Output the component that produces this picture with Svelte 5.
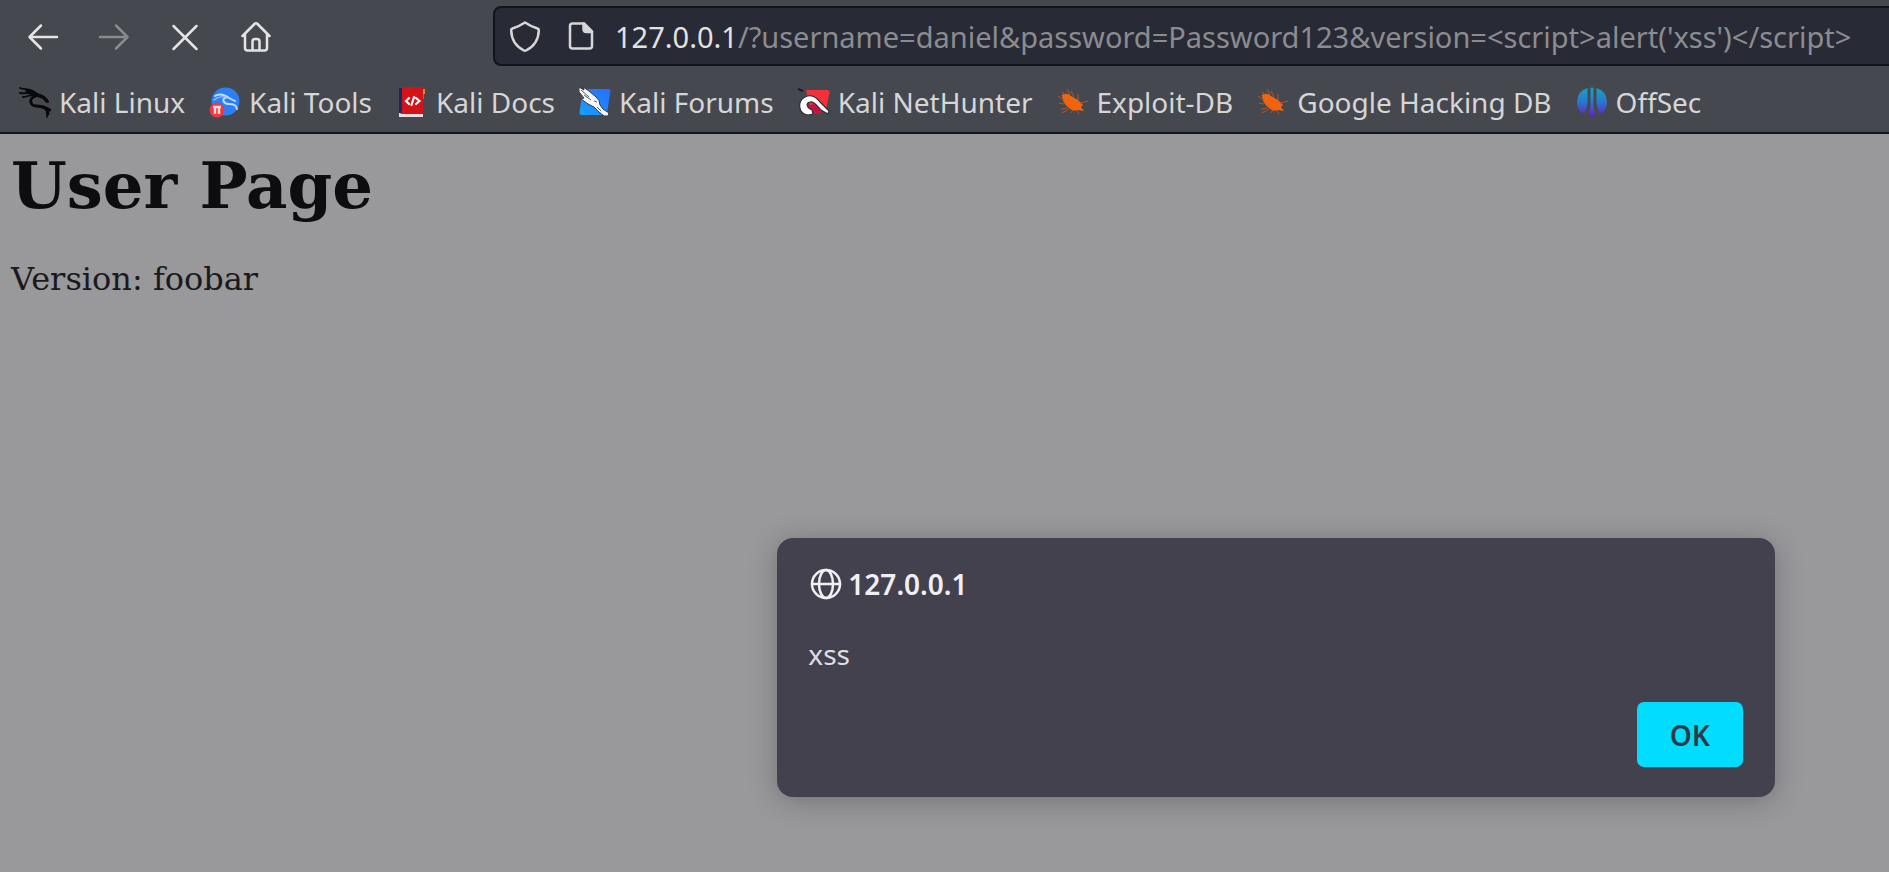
<script>
  const bookmarks = [
    { id: 'kali', label: 'Kali Linux' },
    { id: 'tools', label: 'Kali Tools' },
    { id: 'docs', label: 'Kali Docs' },
    { id: 'forums', label: 'Kali Forums' },
    { id: 'nethunter', label: 'Kali NetHunter' },
    { id: 'exploit', label: 'Exploit-DB' },
    { id: 'exploit', label: 'Google Hacking DB' },
    { id: 'offsec', label: 'OffSec' }
  ];
  const host = '127.0.0.1';
  const query = "/?username=daniel&password=Password123&version=<" + "script>alert('xss')</" + "script>";
</script>

<div class="browser">
  <header>
    <div class="toolbar">
      <nav class="controls" aria-label="Navigation">
        <button aria-label="Back">
          <svg viewBox="0 0 32 32"><path d="M30 16H3M14 4.500L2.500 16L14 27.500" /></svg>
        </button>
        <button aria-label="Forward" disabled>
          <svg viewBox="0 0 32 32"><path d="M2 16H29M18 4.500L29.500 16L18 27.500" /></svg>
        </button>
        <button aria-label="Stop">
          <svg viewBox="0 0 32 32"><path d="M4.500 5L27.500 28M27.500 5L4.500 28" /></svg>
        </button>
        <button aria-label="Home">
          <svg viewBox="0 0 32 32"><path d="M2.500 15L14.500 3Q16 1.500 17.500 3L29.500 15M5 13V27Q5 29.500 7.500 29.500H24.500Q27 29.500 27 27V13M12.500 29V20.500Q12.500 18 15 18H17Q19.500 18 19.500 20.500V29" /></svg>
        </button>
      </nav>
      <div class="address">
        <svg viewBox="0 0 32 32" aria-hidden="true"><path d="M16 2.500Q22 6.500 28.500 8.500Q30 9 29.800 10.500C29.500 20 24 27 17 30.500Q16 31 15 30.500C8 27 2.500 20 2.200 10.500Q2 9 3.500 8.500Q10 6.500 16 2.500Z" /></svg>
        <svg class="doc" viewBox="0 0 32 32" aria-hidden="true"><path d="M7.500 3.500H19L27 11.500V26Q27 28.500 24.500 28.500H7.500Q5 28.500 5 26V6Q5 3.500 7.500 3.500Z" /><path class="solid" d="M18.500 3.500V9Q18.500 12 21.500 12H27Z" /></svg>
        <div class="url"><b>{host}</b>{query}</div>
      </div>
    </div>
    <nav class="bookmarks" aria-label="Bookmarks">
      {#each bookmarks as item}
        <a href="#bookmark">
          <svg viewBox="0 0 32 32" aria-hidden="true">
            {#if item.id === 'kali'}
              <g fill="none" stroke="#08090b" stroke-linecap="round" stroke-linejoin="round">
                <path stroke-width="1.800" d="M1 2C6 4 9 2 14 5C17 7 19 9 21 9C25 10 27 13 29 16M1 7C6 8 9 6 14 8M4 11C8 11 10 9 14 9" />
                <path stroke-width="3.200" d="M8 5C14 6 18 10 24 11L28 15" />
                <path stroke-width="2.800" d="M17 10C9 12 11 20 17 20C23 20 29 21 29 28M27 22L31 24" />
                <path stroke-width="1.600" d="M28 22L28 31" />
              </g>
            {:else if item.id === 'tools'}
              <circle cx="16.500" cy="15.500" r="14" fill="#2b80f6" />
              <g fill="none" stroke="#c7dcfb" stroke-linecap="round">
                <path stroke-width="1.800" d="M6 10C11 7 16 9 20 12L26 15" />
                <path stroke-width="2" d="M18 11C12 12 14 18 20 18C25 18 27 19 28 23" />
                <path stroke-width="1.200" stroke="#a8caf9" d="M5 14C10 10 14 10 18 12" />
              </g>
              <circle cx="8" cy="24" r="7.500" fill="#f0383e" />
              <path d="M4 21H12M6 21V28M10 21V28" stroke="#ffdada" stroke-width="2.400" fill="none" />
            {:else if item.id === 'docs'}
              <path d="M3 2H7V27H3Z" fill="#142a63" /><path d="M3 27H27V31H3Z" fill="#eadde0" />
              <path d="M6 1H27V28H4Q6 27 6 24Z" fill="#d31318" />
              <path d="M27 3H29V8H27Z" fill="#e48a20" /><path d="M27 8H28V13H27Z" fill="#43994c" />
              <path d="M13 12L10 15L13 18M20 12L23.500 15L20 18M18 11L15.500 19" stroke="#fff" stroke-width="2.200" fill="none" stroke-linecap="round" />
            {:else if item.id === 'forums'}
              <defs><linearGradient id="forum" x1="0" y1="1" x2="1" y2="0"><stop offset="0" stop-color="#17a2ff" /><stop offset="1" stop-color="#286cff" /></linearGradient></defs>
              <path d="M4 3H30Q32 3 31.500 5L28 27Q27.500 29 25 29H3Q0 29 0.500 26Z" fill="url(#forum)" />
              <path d="M0 1L5 4L4 1L10 5L17 11Q21 14 21 19L24 23L30 27L29 30L25 30L20 26L15 21L9 18L2 13L5 12L0 6Z" fill="#f6f6f6" stroke="#343840" stroke-width="1" />
              <path d="M2 4L10 11M5 9L12 14M15 15L18 16M18 21L22 25" stroke="#59606b" stroke-width="1" fill="none" />
            {:else if item.id === 'nethunter'}
              <path d="M8 4H29Q32 4 31.500 7L28 24L14 28Z" fill="#f4313b" />
              <path d="M1 21L5 28Q8 30 14 28H25L18 18Z" fill="#c81443" />
              <path d="M0 3L5 5" stroke="#17191e" stroke-width="2" />
              <path d="M10 29C0 28 -1 15 7 11C14 7 19 12 22 16L31 25L30 28L23 24C19 20 16 15 12 16C7 17 9 22 14 24L15 28Z" fill="#fff" stroke="#2c3038" stroke-width="1.200" />
            {:else if item.id === 'exploit'}
              <path d="M5 9Q10 6 14 10L21 14L26 19L24 21L27 25L21 24Q16 26 12 22Q5 17 5 9Z" fill="#f06410" />
              <path d="M8 9L5 6M13 9L10 3M17 11L14 5M21 14L21 8M24 17L31 15M7 14L1 10M7 18L2 17M10 22L4 23M12 23L5 27M16 24L14 27M20 24L22 28" stroke="#b55a28" stroke-width="0.900" fill="none" />
            {:else}
              <defs><linearGradient id="off" x1="0" y1="0" x2="0" y2="32" gradientUnits="userSpaceOnUse"><stop offset="0.060" stop-color="#11a7bd" /><stop offset="0.500" stop-color="#2c75d2" /><stop offset="0.950" stop-color="#6422bd" /></linearGradient></defs>
              <path d="M11.500 2V16Q11.500 24 7 28Q1 24 1 15Q2 5 11.500 2ZM20.500 2Q30 5 31 15Q31 24 25 28Q20.500 24 20.500 16ZM14.500 2Q16 1 17.500 2V18Q18 25 19 29Q16 33 13 29Q14 25 14.500 18Z" fill="url(#off)" />
            {/if}
          </svg>
          <span>{item.label}</span>
        </a>
      {/each}
    </nav>
  </header>

  <main>
    <h1>User Page</h1>
    <p>Version: foobar</p>
  </main>

  <div class="dialog" role="alertdialog" aria-labelledby="origin" aria-describedby="message">
    <div class="origin">
      <svg viewBox="0 0 32 32" aria-hidden="true"><circle cx="16" cy="16" r="14" /><ellipse cx="16" cy="16" rx="7" ry="14" /><path d="M2 16H30" /></svg>
      <strong id="origin">{host}</strong>
    </div>
    <p id="message">xss</p>
    <button>OK</button>
  </div>
</div>

<style>
  :global(body) { margin: 0; background: #99999b; }
  .browser {
    position: relative;
    min-height: 100vh;
    overflow: hidden;
    font-family: "Noto Sans", sans-serif;
    font-size: 28px;
    background: #99999b;
  }
  header { background: #45484f; border-bottom: 2px solid #12151a; color: #d6d6d6; }
  .toolbar { display: flex; padding-top: 6px; }
  .controls { display: flex; align-items: center; gap: 39px; flex: 0 0 26.100%; padding: 2px 0 0 27px; box-sizing: border-box; }
  button { font: inherit; cursor: pointer; }
  .controls button { display: flex; padding: 0; border: 0; background: none; color: #e4e4e4; }
  .controls button:disabled { color: #898b8f; }
  svg { width: 32px; height: 32px; flex: none; }
  .controls svg, .address svg, .origin svg { fill: none; stroke: currentColor; stroke-width: 2.500; stroke-linecap: round; stroke-linejoin: round; }
  .address {
    flex: 1;
    min-width: 0;
    display: flex;
    align-items: center;
    height: 56px;
    padding-left: 14px;
    margin-right: -8px;
    border: 2px solid #12141b;
    border-radius: 8px;
    background: #282a36;
    color: #d6d6d6;
  }
  .address .doc { margin: 0 18px 0 24px; }
  .address .solid { fill: currentColor; }
  .url { color: #8b8c90; font-size: 29px; white-space: nowrap; }
  .url b { color: #e2e2e3; font-weight: 400; }
  .bookmarks { display: flex; gap: 24px; height: 66px; padding: 6px 19px 0; align-items: center; box-sizing: border-box; }
  .bookmarks a { display: flex; align-items: center; gap: 8px; color: inherit; text-decoration: none; white-space: nowrap; }
  main { padding: 16px 11px; font-family: "DejaVu Serif", serif; color: #1a1a1c; }
  h1 { margin: 0; font-size: 64px; line-height: 72px; color: #0d0d0f; }
  main p { margin: 38px 0 0; font-size: 32px; line-height: 38px; }
  .dialog {
    position: absolute;
    top: 538px;
    right: 6.050%;
    width: 52.800%;
    box-sizing: border-box;
    display: flex;
    flex-direction: column;
    padding: 28px 32px 30px 31px;
    border-radius: 16px;
    background: #44414e;
    color: #f0f0f3;
    box-shadow: 0 4px 28px rgba(30, 30, 34, 0.300);
  }
  .origin { display: flex; align-items: center; gap: 6px; padding-left: 2px; line-height: 36px; }
  .origin strong { font-weight: 600; }
  .dialog p { margin: 34px 0 0; line-height: 36px; color: #dedee2; }
  .dialog button {
    align-self: flex-end;
    width: 106px;
    height: 65px;
    margin-top: 30px;
    padding: 0;
    border: 0;
    border-radius: 7px;
    background: #00ddff;
    color: #2b3a44;
    font-weight: 600;
  }
</style>
